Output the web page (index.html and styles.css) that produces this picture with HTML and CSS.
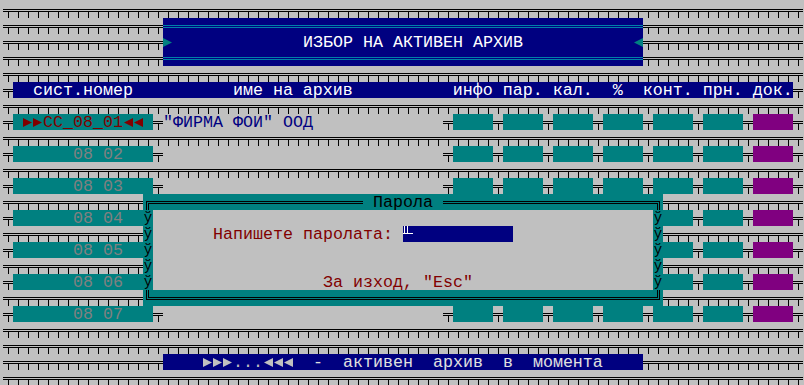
FILE: index.html
```html
<!DOCTYPE html>
<html lang="bg">
<head>
<meta charset="utf-8">
<title>Избор на активен архив</title>
<link rel="stylesheet" href="styles.css">
</head>
<body>
<div class="screen">
  <div class="title-box">
    <div class="dline cyan"></div>
    <div class="tb-mid">
      <span class="tri r teal"></span>
      <span class="txt tb-text">ИЗБОР НА АКТИВЕН АРХИВ</span>
      <span class="tri l teal"></span>
    </div>
    <div class="dline cyan"></div>
  </div>

  <div class="hdr txt">  сист.номер          име на архив          инфо пар. кал.  %  конт. прн. док.</div>

  <div class="drow r8">
    <span class="t"></span>
    <span class="name cur-arch"><span class="sp"></span><span class="tri r"></span><span class="tri r"></span><span class="txt">СС_08_01</span><span class="tri l"></span><span class="tri l"></span><span class="sp"></span></span>
    <span class="t"></span>
    <span class="mid txt firm">"ФИРМА ФОИ" ООД</span>
    <span class="t"></span><span class="box"></span><span class="t"></span><span class="box"></span><span class="t"></span><span class="box"></span><span class="t"></span><span class="box"></span><span class="t"></span><span class="box"></span><span class="t"></span><span class="box"></span><span class="t"></span><span class="box p"></span><span class="t"></span>
  </div>

  <div class="drow r10">
    <span class="t"></span><span class="name"><span class="txt num">08 02</span></span><span class="t"></span><span class="mid"></span>
    <span class="t"></span><span class="box"></span><span class="t"></span><span class="box"></span><span class="t"></span><span class="box"></span><span class="t"></span><span class="box"></span><span class="t"></span><span class="box"></span><span class="t"></span><span class="box"></span><span class="t"></span><span class="box p"></span><span class="t"></span>
  </div>

  <div class="drow r12">
    <span class="t"></span><span class="name"><span class="txt num">08 03</span></span><span class="t"></span><span class="mid"></span>
    <span class="t"></span><span class="box"></span><span class="t"></span><span class="box"></span><span class="t"></span><span class="box"></span><span class="t"></span><span class="box"></span><span class="t"></span><span class="box"></span><span class="t"></span><span class="box"></span><span class="t"></span><span class="box p"></span><span class="t"></span>
  </div>

  <div class="drow r14">
    <span class="t"></span><span class="name"><span class="txt num">08 04</span></span><span class="t"></span><span class="mid"></span>
    <span class="t"></span><span class="box"></span><span class="t"></span><span class="box"></span><span class="t"></span><span class="box"></span><span class="t"></span><span class="box"></span><span class="t"></span><span class="box"></span><span class="t"></span><span class="box"></span><span class="t"></span><span class="box p"></span><span class="t"></span>
  </div>

  <div class="drow r16">
    <span class="t"></span><span class="name"><span class="txt num">08 05</span></span><span class="t"></span><span class="mid"></span>
    <span class="t"></span><span class="box"></span><span class="t"></span><span class="box"></span><span class="t"></span><span class="box"></span><span class="t"></span><span class="box"></span><span class="t"></span><span class="box"></span><span class="t"></span><span class="box"></span><span class="t"></span><span class="box p"></span><span class="t"></span>
  </div>

  <div class="drow r18">
    <span class="t"></span><span class="name"><span class="txt num">08 06</span></span><span class="t"></span><span class="mid"></span>
    <span class="t"></span><span class="box"></span><span class="t"></span><span class="box"></span><span class="t"></span><span class="box"></span><span class="t"></span><span class="box"></span><span class="t"></span><span class="box"></span><span class="t"></span><span class="box"></span><span class="t"></span><span class="box p"></span><span class="t"></span>
  </div>

  <div class="drow r20">
    <span class="t"></span><span class="name"><span class="txt num">08 07</span></span><span class="t"></span><span class="mid"></span>
    <span class="t"></span><span class="box"></span><span class="t"></span><span class="box"></span><span class="t"></span><span class="box"></span><span class="t"></span><span class="box"></span><span class="t"></span><span class="box"></span><span class="t"></span><span class="box"></span><span class="t"></span><span class="box p"></span><span class="t"></span>
  </div>

  <div class="dlg">
    <div class="dlg-edge">
      <span class="corner tl"></span>
      <span class="dline blk"></span>
      <span class="dlg-title"><span class="txt">Парола</span></span>
      <span class="dline blk"></span>
      <span class="corner tr"></span>
    </div>
    <div class="dlg-mid">
      <div class="side"><span class="vb">ў</span><span class="vb">ў</span><span class="vb">ў</span><span class="vb">ў</span><span class="vb">ў</span></div>
      <div class="body">
        <span class="txt prompt">Напишете паролата:</span>
        <span class="input"><span class="cursor"></span></span>
        <span class="txt esc">За изход, "Esc"</span>
      </div>
      <div class="side"><span class="vb">ў</span><span class="vb">ў</span><span class="vb">ў</span><span class="vb">ў</span><span class="vb">ў</span></div>
    </div>
    <div class="dlg-edge">
      <span class="corner bl"></span>
      <span class="dline blk"></span>
      <span class="corner br"></span>
    </div>
  </div>

  <div class="foot">
    <span class="tri r"></span><span class="tri r"></span><span class="tri r"></span>
    <span class="txt">...</span>
    <span class="tri l"></span><span class="tri l"></span><span class="tri l"></span>
    <span class="txt foot-text">  -  активен  архив  в  момента</span>
  </div>
</div>
</body>
</html>
```

FILE: styles.css
```css
html, body {
  margin: 0;
  padding: 0;
}

body {
  width: 804px;
  height: 385px;
  overflow: hidden;
  background: #c0c0c0;
  font-family: "Liberation Mono", "DejaVu Sans Mono", monospace;
  font-size: 16.667px;
}

.screen {
  margin: 2px 0 0 3px;
  width: 800px;
  height: 384px;
  display: grid;
  grid-template-columns: repeat(80, 10px);
  grid-template-rows: repeat(24, 16px);
  background-color: #c0c0c0;
  background-image:
    linear-gradient(to bottom, transparent 7px, #000 7px 8px, transparent 8px 9px, #000 9px 10px, transparent 10px),
    linear-gradient(to bottom, #c0c0c0 10px, transparent 10px),
    linear-gradient(to right, transparent 5px, #000 5px 6px, transparent 6px);
  background-size: 100% 16px, 100% 16px, 10px 16px;
}

.txt {
  white-space: pre;
  line-height: 16px;
  padding-top: 1px;
  box-sizing: border-box;
  height: 16px;
  overflow: visible;
}

/* double horizontal line ═ */
.dline {
  flex: 1;
  height: 16px;
}
.dline.cyan {
  background: linear-gradient(to bottom, transparent 7px, #0080a8 7px 8px, transparent 8px 9px, #0080a8 9px 10px, transparent 10px);
}
.dline.blk {
  background: linear-gradient(to bottom, transparent 7px, #000 7px 8px, transparent 8px 9px, #000 9px 10px, transparent 10px);
}

/* triangles ► ◄ */
.tri {
  flex: none;
  display: inline-block;
  width: 10px;
  height: 16px;
  background: currentColor;
}
.tri.r { clip-path: polygon(0 4px, 9px 8.5px, 0 13px); }
.tri.l { clip-path: polygon(10px 4px, 1px 8.5px, 10px 13px); }
.tri.teal { background: #008080; }

/* title box: arrow at col 16, text at cols 30-51, arrow at col 63 */
.title-box {
  grid-column: 17 / span 48;
  grid-row: 2 / span 3;
  background: #000080;
  display: grid;
  grid-template-rows: repeat(3, 16px);
}
.tb-mid {
  display: flex;
  color: #fff;
}
.tb-text {
  flex: 1;
  padding-left: 130px;
}

/* header */
.hdr {
  grid-column: 2 / span 78;
  grid-row: 6;
  background: #000080;
  color: #fff;
}

/* data rows */
.drow {
  grid-column: 1 / span 80;
  display: flex;
  height: 16px;
}
.r8 { grid-row: 8; }
.r10 { grid-row: 10; }
.r12 { grid-row: 12; }
.r14 { grid-row: 14; }
.r16 { grid-row: 16; }
.r18 { grid-row: 18; }
.r20 { grid-row: 20; }

.drow .t {
  flex: none;
  width: 10px;
}
.name {
  flex: none;
  width: 140px;
  background: #008080;
  color: #808080;
  display: flex;
}
.num {
  padding-left: 60px;
}
.name.cur-arch {
  color: #800000;
}
.sp {
  flex: none;
  width: 10px;
}
.mid {
  flex: none;
  width: 280px;
  height: 16px;
  background: #c0c0c0;
}
.firm {
  color: #000080;
}
.box {
  flex: none;
  width: 40px;
  background: #008080;
}
.box.p {
  background: #800080;
}

/* dialog */
.dlg {
  grid-column: 15 / span 52;
  grid-row: 13 / span 7;
  display: grid;
  grid-template-rows: 16px 80px 16px;
  z-index: 1;
}
.dlg-edge {
  display: flex;
  background: #008080;
}
.dlg-title {
  flex: none;
  width: 80px;
  display: flex;
  justify-content: center;
  color: #000;
}
.corner {
  flex: none;
  width: 10px;
  height: 16px;
  position: relative;
}
.corner::before,
.corner::after {
  content: "";
  position: absolute;
  box-sizing: border-box;
}
.corner.tl::before { left: 3px; top: 7px; right: 0; bottom: 0; border-left: 1px solid #000; border-top: 1px solid #000; }
.corner.tl::after  { left: 5px; top: 9px; right: 0; bottom: 0; border-left: 1px solid #000; border-top: 1px solid #000; }
.corner.tr::before { left: 0; top: 7px; right: 3px; bottom: 0; border-right: 1px solid #000; border-top: 1px solid #000; }
.corner.tr::after  { left: 0; top: 9px; right: 5px; bottom: 0; border-right: 1px solid #000; border-top: 1px solid #000; }
.corner.bl::before { left: 3px; top: 0; right: 0; height: 10px; border-left: 1px solid #000; border-bottom: 1px solid #000; }
.corner.bl::after  { left: 5px; top: 0; right: 0; height: 8px; border-left: 1px solid #000; border-bottom: 1px solid #000; }
.corner.br::before { left: 0; top: 0; right: 3px; height: 10px; border-right: 1px solid #000; border-bottom: 1px solid #000; }
.corner.br::after  { left: 0; top: 0; right: 5px; height: 8px; border-right: 1px solid #000; border-bottom: 1px solid #000; }

.dlg-mid {
  display: grid;
  grid-template-columns: 10px 500px 10px;
}
.side {
  background: #008080;
  color: #000;
  display: grid;
  grid-template-rows: repeat(5, 16px);
  text-align: center;
}
.vb {
  font-size: 14px;
  line-height: 16px;
  height: 16px;
  overflow: hidden;
}
.body {
  background: #c0c0c0;
  color: #800000;
  display: grid;
  grid-template-columns: repeat(50, 10px);
  grid-template-rows: repeat(5, 16px);
}
.prompt {
  grid-row: 2;
  grid-column: 7 / span 18;
}
.input {
  grid-row: 2;
  grid-column: 26 / span 11;
  background: #000080;
  display: flex;
}
.cursor {
  flex: none;
  width: 10px;
  height: 16px;
  position: relative;
}
.cursor::before {
  content: "";
  position: absolute;
  left: 1px;
  top: 0;
  width: 2px;
  height: 8px;
  border-left: 1px solid #fff;
  border-right: 1px solid #fff;
}
.cursor::after {
  content: "";
  position: absolute;
  left: 0;
  right: 0;
  top: 7px;
  height: 1px;
  background: #fff;
}
.esc {
  grid-row: 5;
  grid-column: 18 / span 15;
}

/* footer: arrows start at col 20 */
.foot {
  grid-column: 17 / span 48;
  grid-row: 23;
  background: #000080;
  color: #c0c0c0;
  display: flex;
  padding-left: 40px;
}
.foot-text {
  color: #e0e0e0;
}
```
